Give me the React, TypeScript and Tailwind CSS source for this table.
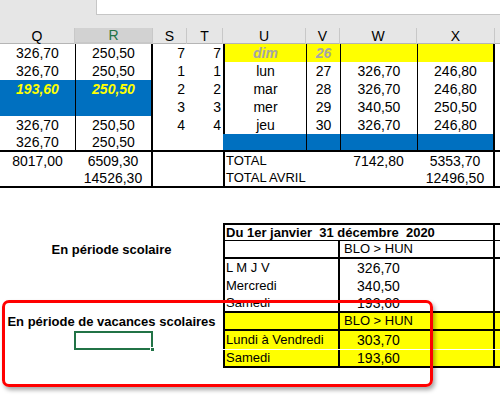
import React from "react";

const cols = "grid grid-cols-[75px_78px_34px_36px_83px_34px_77px_78px_1fr]";

function C({ className = "", children }: { className?: string; children?: React.ReactNode }) {
  return (
    <div className={`h-[18px] flex items-center overflow-hidden whitespace-nowrap ${className}`}>
      {children}
    </div>
  );
}

const rows = [
  { q: "326,70", r: "250,50", s: "7", u: "dim", v: "26", w: "", x: "" },
  { q: "326,70", r: "250,50", s: "1", u: "lun", v: "27", w: "326,70", x: "246,80" },
  { q: "193,60", r: "250,50", s: "2", u: "mar", v: "28", w: "326,70", x: "246,80" },
  { q: "", r: "", s: "3", u: "mer", v: "29", w: "340,50", x: "250,50" },
  { q: "326,70", r: "250,50", s: "4", u: "jeu", v: "30", w: "326,70", x: "246,80" },
  { q: "326,70", r: "250,50", s: "", u: "", v: "", w: "", x: "" },
];

const headers = ["Q", "R", "S", "T", "U", "V", "W", "X", ""];

export default function App() {
  return (
    <div className="relative w-[500px] h-[398px] overflow-hidden bg-white text-black font-['Liberation_Sans',Arial,sans-serif] text-[13px]">
      {/* formula bar area */}
      <div className="flex h-[15px] bg-[#e6e6e6]">
        <div className="w-[96px]" />
        <div className="flex-1 bg-white border-l border-b border-[#c6c6c6]" />
      </div>
      <div className="h-[13px] bg-[#e6e6e6]" />

      {/* column headers */}
      <div className={`${cols} h-[16px] bg-[#e6e6e6] border-b border-[#b5b5b5]`}>
        {headers.map((h, i) => (
          <div
            key={i}
            className={`flex items-center justify-center text-[14px] leading-none ${
              h === "R"
                ? "bg-[#d2d2d2] text-[#217346] border-b-2 border-[#217346]"
                : ""
            } ${i < 8 ? "border-r border-[#c8c8c8]" : ""} ${i === 7 ? "border-[#9a9a9a]" : ""}`}
          >
            {h}
          </div>
        ))}
      </div>

      {/* data rows */}
      <div className={`${cols} text-[14px]`}>
        {rows.map((r, i) => {
          const last = i === 5;
          const blueQR = i === 2 || i === 3;
          const yellow = i === 0;
          const b = last ? "border-b-2 border-b-black" : "";
          const uvwx = yellow
            ? "bg-[#ffff00] text-[#a6a6a6] font-bold italic"
            : last
            ? "bg-[#0070c0]"
            : "";
          const qr = blueQR ? "bg-[#0070c0] text-[#ffff00] font-bold italic" : "";
          return (
            <React.Fragment key={i}>
              <C className={`justify-center ${qr} ${b}`}>{r.q}</C>
              <C className={`justify-center border-l border-r-2 border-black ${qr} ${b}`}>{r.r}</C>
              <C className={`justify-end pr-[2px] ${b}`}>{r.s}</C>
              <C className={`justify-end pr-[2px] ${b}`}>{r.s}</C>
              <C className={`justify-center ${last ? "" : "border-l-2 border-black"} ${uvwx} ${b}`}>{r.u}</C>
              <C className={`justify-center border-l border-black ${uvwx} ${b}`}>{r.v}</C>
              <C className={`justify-center border-l border-black ${uvwx} ${b}`}>{r.w}</C>
              <C className={`justify-center border-l border-r-2 border-black ${uvwx} ${b}`}>{r.x}</C>
              <C className={b} />
            </React.Fragment>
          );
        })}

        {/* totals */}
        <C className="justify-center">8017,00</C>
        <C className="justify-center border-r-2 border-black">6509,30</C>
        <C />
        <C />
        <C className="col-span-2 border-l-2 border-black pl-[1px] text-[13px]">TOTAL</C>
        <C className="justify-center">7142,80</C>
        <C className="justify-center border-r-2 border-black">5353,70</C>
        <C />

        <C className="border-b-2 border-black" />
        <C className="justify-center border-r-2 border-b-2 border-black">14526,30</C>
        <C className="border-b-2 border-black" />
        <C className="border-b-2 border-black" />
        <C className="col-span-2 border-l-2 border-b-2 border-black pl-[1px] text-[13px]">TOTAL AVRIL</C>
        <C className="border-b-2 border-black" />
        <C className="justify-center border-r-2 border-b-2 border-black">12496,50</C>
        <C className="border-b-2 border-black" />
      </div>

      <div className="h-[35px]" />

      {/* yearly table */}
      <div className={cols}>
        <C className="col-span-4" />
        <C className="col-span-4 border-t-2 border-l-2 border-r-2 border-b border-black pl-[1px] font-bold">
          Du 1er janvier&nbsp; 31 décembre&nbsp; 2020
        </C>
        <C className="border-t-2 border-b border-black" />

        <C className="col-span-4 justify-center font-bold">En période scolaire</C>
        <C className="col-span-2 border-l-2 border-r-2 border-b-2 border-black" />
        <C className="justify-center border-b-2 border-black">BLO &gt; HUN</C>
        <C className="border-r-2 border-b-2 border-black" />
        <C className="border-b-2 border-black" />

        {[
          ["L M J V", "326,70"],
          ["Mercredi", "340,50"],
          ["Samedi", "193,60"],
        ].map(([l, v], i) => {
          const b = i === 2 ? "border-b-2 border-black" : "";
          return (
            <React.Fragment key={l}>
              <C className="col-span-4" />
              <C className={`col-span-2 border-l-2 border-r-2 border-black pl-[1px] ${b}`}>{l}</C>
              <C className={`justify-center text-[14px] ${b}`}>{v}</C>
              <C className={`border-r-2 border-black ${b}`} />
              <C className={b} />
            </React.Fragment>
          );
        })}

        <C className="col-span-4 justify-center font-bold">En période de vacances scolaires</C>
        <C className="col-span-2 bg-[#ffff00] border-l-2 border-r-2 border-b-2 border-black" />
        <C className="justify-center bg-[#ffff00] border-b-2 border-black">BLO &gt; HUN</C>
        <C className="bg-[#ffff00] border-r-2 border-b-2 border-black" />
        <C className="bg-[#ffff00] border-b-2 border-black" />

        {[
          ["Lundi à Vendredi", "303,70"],
          ["Samedi", "193,60"],
        ].map(([l, v], i) => {
          const b = i === 1 ? "border-b-2 border-black" : "";
          return (
            <React.Fragment key={l + i}>
              <C />
              {i === 0 ? (
                <div className="relative h-[19px] -ml-[1px] border-2 border-[#217346]">
                  <div className="absolute -right-[4px] -bottom-[4px] w-[5px] h-[5px] bg-[#217346] border border-white" />
                </div>
              ) : (
                <C />
              )}
              <C className="col-span-2" />
              <C className={`col-span-2 bg-[#ffff00] border-l-2 border-r-2 border-black pl-[1px] ${b}`}>{l}</C>
              <C className={`justify-center bg-[#ffff00] text-[14px] ${b}`}>{v}</C>
              <C className={`bg-[#ffff00] border-r-2 border-black ${b}`} />
              <C className={`bg-[#ffff00] ${b}`} />
            </React.Fragment>
          );
        })}
      </div>

      {/* red annotation frame */}
      <div className="absolute left-[2px] top-[300px] w-[431px] h-[87px] rounded-[7px] border-[3px] border-[#ff0000] shadow-[2px_3px_4px_rgba(0,0,0,0.35)]" />
    </div>
  );
}
